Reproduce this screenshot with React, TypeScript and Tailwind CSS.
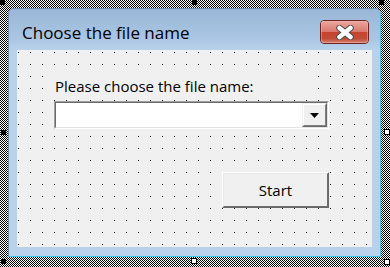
import React from "react";

function Handle({ cls, filled }: { cls: string; filled: boolean }) {
  return (
    <div
      className={
        "absolute w-[6px] h-[6px] border border-black " +
        (filled ? "bg-black " : "bg-white ") +
        cls
      }
    />
  );
}

function Hatch() {
  return (
    <svg
      className="absolute inset-0 pointer-events-none"
      width="390"
      height="267"
      shapeRendering="crispEdges"
    >
      <defs>
        <pattern id="hatch" width="4" height="4" patternUnits="userSpaceOnUse">
          <rect x="0" y="0" width="1" height="1" fill="#000" />
          <rect x="2" y="0" width="1" height="1" fill="#000" />
          <rect x="1" y="1" width="1" height="1" fill="#000" />
          <rect x="3" y="1" width="1" height="1" fill="#000" />
          <rect x="0" y="2" width="1" height="1" fill="#000" />
          <rect x="2" y="2" width="1" height="1" fill="#000" />
          <rect x="1" y="3" width="1" height="1" fill="#000" />
          <rect x="3" y="3" width="1" height="1" fill="#000" />
        </pattern>
      </defs>
      <rect x="0" y="0" width="390" height="267" fill="#fff" />
      <rect x="0" y="0" width="390" height="267" fill="url(#hatch)" />
    </svg>
  );
}

export default function App() {
  return (
    <div
      className="relative w-[390px] h-[267px] bg-white p-[8px] overflow-hidden"
      style={{ fontFamily: '"Open Sans", "Noto Sans", sans-serif' }}
    >
      <Hatch />
      {/* window */}
      <div className="relative w-[373px] h-[249px] flex flex-col rounded-t-[6px] border border-[#6f8aa8] border-r-[#35c6ea] border-b-[#35c6ea] bg-[#b9d1ea]">
        {/* title bar */}
        <div className="relative h-[41px] rounded-t-[5px] bg-[linear-gradient(#9ab7d7,#a9c5e3_70%,#b9d1ea)] flex items-start">
          <div className="pl-[13px] pt-[13px] text-[17px] leading-[22px] text-black">
            Choose the file name
          </div>
          {/* close button */}
          <div className="absolute left-[311px] top-[11px] w-[49px] h-[24px] rounded-[4px] border border-[#6b2323] overflow-hidden flex flex-col">
            <div className="h-[11px] bg-[linear-gradient(#eba79e,#d9776b)]" />
            <div className="flex-1 bg-[linear-gradient(#c5432f,#c24c38_60%,#d7806f)]" />
            <div className="absolute inset-0 rounded-[3px] border border-[#f0b9b2]/50" />
            <svg
              className="absolute left-[15px] top-[4px]"
              width="18"
              height="15"
              viewBox="0 0 18 15"
            >
              <path
                d="M3.5 3 L14.5 12 M14.5 3 L3.5 12"
                stroke="#4a4a4a"
                strokeWidth="6.5"
                strokeLinecap="round"
              />
              <path
                d="M3.5 3 L14.5 12 M14.5 3 L3.5 12"
                stroke="#ffffff"
                strokeWidth="4.5"
                strokeLinecap="round"
              />
            </svg>
          </div>
        </div>
        {/* client area */}
        <div className="ml-[8px] w-[355px] h-[197px] bg-[#f0f0f0] [background-image:conic-gradient(at_1px_1px,transparent_75%,#000_0)] [background-size:12px_12px] [background-position:1px_2px] pl-[37px] pt-[24px]">
          <div className="w-[275px] flex flex-col items-end">
            <div className="self-start w-[262px] h-[24px] bg-[#f0f0f0] text-[15px] leading-[24px] text-black pl-[1px]">
              Please choose the file name:
            </div>
            {/* combobox */}
            <div className="self-start mt-[3px] w-[275px] h-[28px] border border-t-[#a0a0a0] border-l-[#a0a0a0] border-r-white border-b-white">
              <div className="w-full h-full border border-t-[#696969] border-l-[#696969] border-r-[#e3e3e3] border-b-[#e3e3e3] bg-white flex justify-end">
                <div className="w-[25px] h-full border border-t-[#f0f0f0] border-l-[#f0f0f0] border-r-[#696969] border-b-[#696969]">
                  <div className="w-full h-full border border-t-white border-l-white border-r-[#7f7f7f] border-b-[#7f7f7f] bg-[#f0f0f0] flex items-center justify-center">
                    <svg width="9" height="5" viewBox="0 0 9 5">
                      <polygon points="0,0 9,0 4.5,5" fill="#000" />
                    </svg>
                  </div>
                </div>
              </div>
            </div>
            {/* Start button */}
            <div className="mt-[43px] w-[107px] h-[36px] border border-t-white border-l-white border-r-[#696969] border-b-[#696969]">
              <div className="w-full h-full border border-t-[#e8e8e8] border-l-[#e8e8e8] border-r-[#6d6d6d] border-b-[#6d6d6d] bg-[#f0f0f0] flex items-center justify-center text-[15px] text-black">
                Start
              </div>
            </div>
          </div>
        </div>
      </div>

      {/* selection handles */}
      <Handle cls="left-0 top-0 !w-[5px] !h-[5px]" filled />
      <Handle cls="left-[192px] top-0 !w-[5px] !h-[5px]" filled />
      <Handle cls="left-[379px] top-0 !w-[5px] !h-[5px]" filled />
      <Handle cls="left-[1px] top-[130px] !w-[5px] !h-[5px]" filled />
      <Handle cls="left-[384px] top-[129px]" filled={false} />
      <Handle cls="left-[1px] top-[259px] !w-[5px] !h-[5px]" filled />
      <Handle cls="left-[191px] top-[258px]" filled={false} />
      <Handle cls="left-[384px] top-[259px]" filled={false} />
    </div>
  );
}
